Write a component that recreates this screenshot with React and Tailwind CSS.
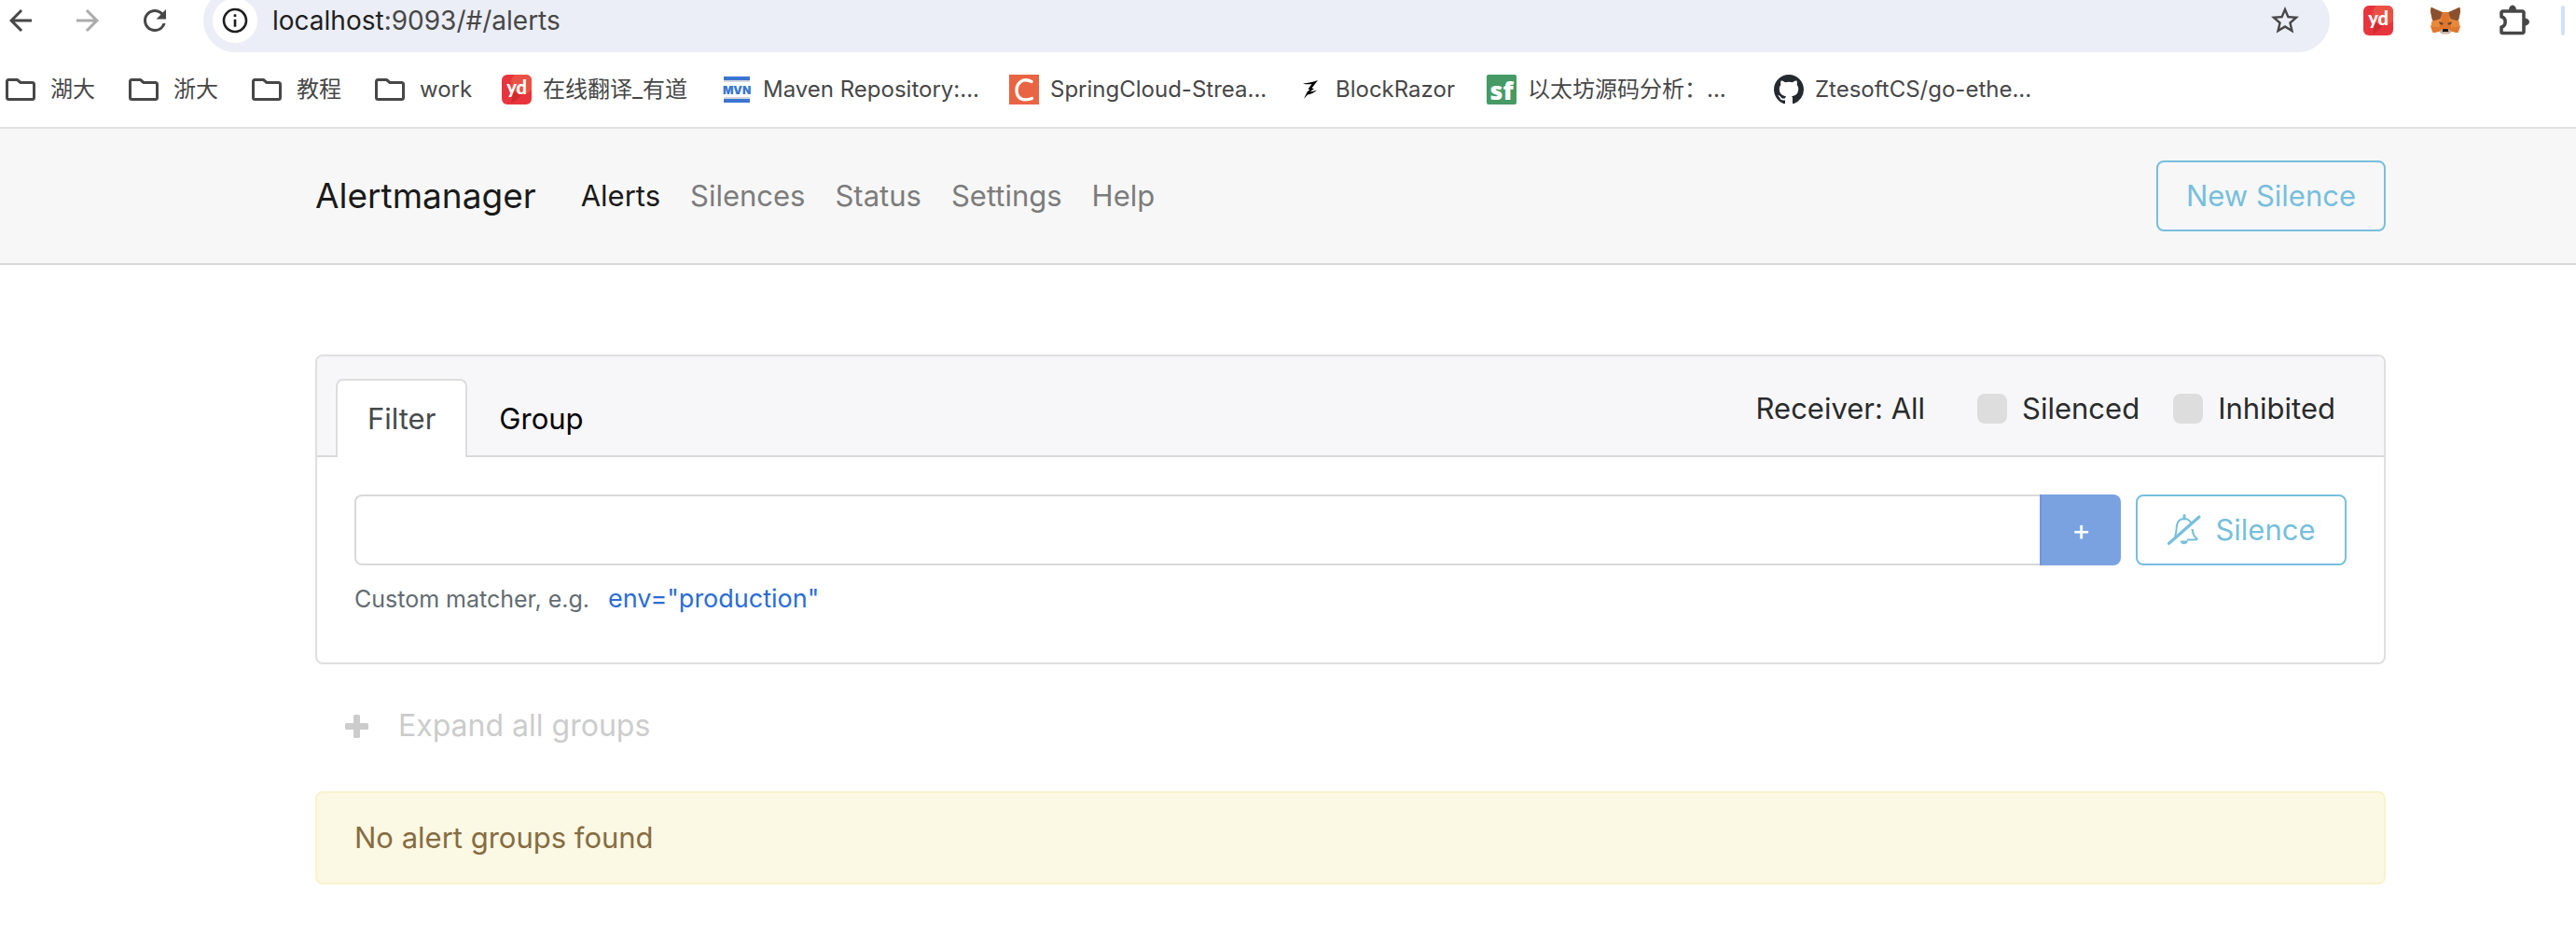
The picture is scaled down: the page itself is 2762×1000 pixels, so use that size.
import React, { useState } from "react";
import { MdArrowBack, MdArrowForward, MdRefresh, MdInfoOutline, MdStarBorder } from "react-icons/md";

function FolderIcon() {
  return (
    <svg className="h-6 w-9 shrink-0" viewBox="0 0 36 24" fill="none" stroke="#474747" strokeWidth="3" strokeLinejoin="round" aria-hidden="true">
      <path d="M1.5 3V20.5a2 2 0 0 0 2 2H28.500a2 2 0 0 0 2-2V6.500a2 2 0 0 0-2-2H16L12.500 1.500H3a1.500 1.500 0 0 0-1.500 1.500Z" />
    </svg>
  );
}

function YoudaoIcon() {
  return (
    <svg className="size-8 shrink-0" viewBox="0 0 32 32" aria-hidden="true">
      <defs>
        <clipPath id="yd-clip"><rect width="32" height="32" rx="6" /></clipPath>
      </defs>
      <g clipPath="url(#yd-clip)">
        <rect width="32" height="32" fill="#e8353d" />
        <path d="M10 30c4-1 11-5 12-13l-10-1Z" fill="#cf2c30" />
        <circle cx="22" cy="9" r="12" fill="#ea5145" />
        <text x="16" y="21" textAnchor="middle" fill="#fff" fontFamily="Lato, sans-serif" fontWeight="900" fontSize="20">yd</text>
      </g>
    </svg>
  );
}

function MavenIcon() {
  return (
    <svg className="size-8 shrink-0" viewBox="0 0 32 32" aria-hidden="true">
      <rect x="2" y="2" width="28" height="28" fill="#fff" />
      <rect x="2" y="2" width="28" height="4" fill="#3a76d2" />
      <rect x="2" y="6" width="28" height="2" fill="#d3d7dc" />
      <text x="16" y="21" textAnchor="middle" fill="#3a76d2" fontFamily="Inter, sans-serif" fontWeight="900" fontSize="12">MVN</text>
      <rect x="2" y="24" width="28" height="2" fill="#d3d7dc" />
      <rect x="2" y="26" width="28" height="4" fill="#3a76d2" />
    </svg>
  );
}

function CsdnIcon() {
  return (
    <svg className="size-8 shrink-0" viewBox="0 0 32 32" aria-hidden="true">
      <rect width="32" height="32" fill="#e96443" />
      <path d="M24 7.500C15 2.500 8 9 8 17c0 8.500 7 12 16.500 8.500" fill="none" stroke="#fff" strokeWidth="3.400" strokeLinecap="round" />
    </svg>
  );
}

function RazorIcon() {
  return (
    <svg className="size-8 shrink-0" viewBox="0 0 32 32" fill="#000" aria-hidden="true">
      <path d="M9 9.500C15 9 20 8 25 6L18.500 14.500 21 15 16.500 18.500C19 18 21.500 17.500 24 16.500 21 19.500 17 21 14 21.500L10 26 13.500 18.500 16.500 16 14.500 15.500 18.500 10C15 10.500 12 10.500 9 9.500Z" />
    </svg>
  );
}

function SegmentFaultIcon() {
  return (
    <svg className="size-8 shrink-0 overflow-visible" viewBox="0 0 32 32" aria-hidden="true">
      <rect width="32" height="32" rx="2" fill="#459a66" />
      <text x="16" y="27" textAnchor="middle" fill="#fff" fontFamily="Open Sans, sans-serif" fontWeight="800" fontSize="27">sf</text>
    </svg>
  );
}

function GithubIcon() {
  return (
    <svg className="size-8 shrink-0" viewBox="0 0 16 16" fill="#24292f" aria-hidden="true">
      <path d="M8 0C3.58 0 0 3.58 0 8c0 3.54 2.29 6.53 5.47 7.59.4.07.55-.17.55-.38 0-.19-.01-.82-.01-1.49-2.01.37-2.53-.49-2.69-.94-.09-.23-.48-.94-.82-1.13-.28-.15-.68-.52-.01-.53.63-.01 1.080.58 1.230.82.72 1.210 1.870.87 2.330.66.07-.52.28-.87.51-1.070-1.780-.2-3.640-.89-3.640-3.950 0-.87.31-1.590.82-2.150-.08-.2-.36-1.020.08-2.120 0 0 .67-.21 2.200.82.64-.18 1.320-.27 2-.27.68 0 1.360.09 2 .27 1.530-1.040 2.200-.82 2.200-.82.44 1.100.16 1.920.08 2.120.51.56.82 1.270.82 2.150 0 3.070-1.870 3.750-3.650 3.950.29.25.54.73.54 1.480 0 1.070-.01 1.930-.01 2.200 0 .21.15.46.55.38A8.010 8.010 0 0 0 16 8c0-4.420-3.580-8-8-8Z" />
    </svg>
  );
}

function FoxIcon() {
  return (
    <svg className="size-8 shrink-0" viewBox="0 0 96 96" aria-hidden="true">
      <path d="M2 5 38 21H58L94 5 96 18 90 48 95 68 88 87 68 83 58 91H38L28 83 8 87 1 68 6 48 0 18Z" fill="#df762d" />
      <path d="M6 48 38 40 30 58 28 83 8 87 1 68ZM90 48 58 40 66 58 68 83 88 87 95 68Z" fill="#e88a3a" />
      <path d="M2 5 38 22 31 43 10 49 5 43 0 18ZM94 5 58 22 65 43 86 49 91 43 96 18Z" fill="#8a5131" />
      <path d="M2 68 28 70 28 83 8 87ZM94 68 68 70 68 83 88 87Z" fill="#e0772f" />
      <path d="M27 52 41 56 39 62 30 60ZM69 52 55 56 57 62 66 60Z" fill="#5e4436" />
      <path d="M28 83 39 75H57L68 83 58 91H38Z" fill="#c9b6a8" />
      <path d="M40 75H56L58 84H38Z" fill="#161616" />
    </svg>
  );
}

function PuzzleIcon() {
  return (
    <svg className="size-9 shrink-0" viewBox="0 0 36 36" aria-hidden="true">
      <path d="M4 14V9.500A1.500 1.500 0 0 1 5.500 8H26.500A1.500 1.500 0 0 1 28 9.500V30A1.500 1.500 0 0 1 26.500 31.500H5.500A1.500 1.500 0 0 1 4 30V25C9.500 24 9.500 15 4 14Z" fill="none" stroke="#474747" strokeWidth="3.600" strokeLinejoin="round" />
      <path d="M12 7a4 5.500 0 0 1 8 0ZM29 15.500a5 4 0 0 1 0 8Z" fill="#474747" />
    </svg>
  );
}

function BellSlashIcon() {
  return (
    <svg className="h-9 w-10 shrink-0" viewBox="0 0 40 36" fill="none" stroke="currentColor" aria-hidden="true">
      <path d="M9 25C11 20 10.500 16 11 13 12 7 16 6 19 6S25 8 26.500 11" strokeWidth="2" />
      <path d="M27.500 17C28 22 29.500 25 32.500 27.500L31.500 28.500H22" strokeWidth="2.200" />
      <path d="M19 2.500V6" strokeWidth="3" strokeLinecap="round" />
      <path d="M2.500 32.500 35 4" strokeWidth="3.200" strokeLinecap="round" />
      <path d="M14.500 29.500h8.500a4.300 4.300 0 0 1-8.500 0Z" fill="currentColor" stroke="none" />
    </svg>
  );
}

const bookmarks = [
  { label: "湖大", Icon: FolderIcon, width: "w-[132px]" },
  { label: "浙大", Icon: FolderIcon, width: "w-[132px]" },
  { label: "教程", Icon: FolderIcon, width: "w-[132px]" },
  { label: "work", Icon: FolderIcon, width: "w-[136px]" },
  { label: "在线翻译_有道", Icon: YoudaoIcon, width: "w-[236px]" },
  { label: "Maven Repository:...", Icon: MavenIcon, width: "w-[308px]" },
  { label: "SpringCloud-Strea...", Icon: CsdnIcon, width: "w-[306px]" },
  { label: "BlockRazor", Icon: RazorIcon, width: "w-[206px]" },
  { label: "以太坊源码分析：...", Icon: SegmentFaultIcon, width: "w-[308px]" },
  { label: "ZtesoftCS/go-ethe...", Icon: GithubIcon, width: "w-[308px]" },
];

const navLinks = ["Alerts", "Silences", "Status", "Settings", "Help"];

function BrowserBar() {
  return (
    <header className="overflow-hidden border-b-2 border-[#e1e1e1] bg-white">
      <div className="-mt-3 flex h-[68px] items-center pr-3 pl-1 text-[#474747]">
        <div className="flex gap-9">
          <button aria-label="Back"><MdArrowBack className="size-9" /></button>
          <button aria-label="Forward" className="text-[#ababab]"><MdArrowForward className="size-9" /></button>
          <button aria-label="Reload"><MdRefresh className="size-9" /></button>
        </div>
        <div className="mr-9 ml-[34px] flex h-full flex-1 items-center gap-4 rounded-full bg-[#ebeef6] pr-[30px] pl-[10px]">
          <button aria-label="Site information" className="flex size-12 items-center justify-center rounded-full bg-white text-[#1f1f1f]">
            <MdInfoOutline className="size-8" />
          </button>
          <a href="#/alerts" className="flex-1 text-[28px] leading-10">
            <span className="text-[#1f1f1f]">localhost</span>:9093/#/alerts
          </a>
          <button aria-label="Bookmark this page"><MdStarBorder className="size-9" /></button>
        </div>
        <div className="flex items-center gap-10">
          <button aria-label="Youdao"><YoudaoIcon /></button>
          <button aria-label="MetaMask"><FoxIcon /></button>
        </div>
        <button aria-label="Extensions" className="mr-8 ml-10"><PuzzleIcon /></button>
        <span className="h-8 w-1 rounded-full bg-[#d3e0fb]" />
      </div>
      <nav aria-label="Bookmarks" className="flex h-20 items-center pl-1.5">
        {bookmarks.map(({ label, Icon, width }) => (
          <a key={label} href="#" className={`flex shrink-0 items-center gap-3 text-2xl whitespace-nowrap text-[#474747] ${width}`}>
            <Icon />
            <span>{label}</span>
          </a>
        ))}
      </nav>
    </header>
  );
}

function Toggle({ label }) {
  return (
    <label className="flex items-center gap-4">
      <input type="checkbox" className="size-8 appearance-none rounded-lg bg-[#dddddd] checked:bg-[#77bfdc]" />
      {label}
    </label>
  );
}

function Tab({ label, active, onClick }) {
  return (
    <button
      role="tab"
      aria-selected={active}
      onClick={onClick}
      className={`-mb-0.5 h-[84px] rounded-t-lg border-2 border-b-0 px-8 ${active ? "border-[#dddddd] bg-white text-[#464a4c]" : "border-transparent text-black"}`}
    >
      {label}
    </button>
  );
}

export default function App() {
  const [tab, setTab] = useState("Filter");
  const [matcher, setMatcher] = useState("");
  return (
    <div className="min-h-screen bg-white font-['Inter','Noto_Sans_CJK_SC',sans-serif] text-[31px] leading-[48px] text-[#292b2c]">
      <BrowserBar />
      <div className="border-b-2 border-[#d9d9d9] bg-[#f7f7f7] py-[34px] pr-[204px] pl-[338px]">
        <div className="flex items-center">
          <a href="#" className="mr-12 text-[37px] text-[#1a1a1a]">Alertmanager</a>
          <nav className="flex flex-1 gap-8">
            {navLinks.map((l) => (
              <a key={l} href={"#/" + l.toLowerCase()} className={l === "Alerts" ? "text-[#1a1a1a]" : "text-[#7c7c7c]"}>{l}</a>
            ))}
          </nav>
          <button className="h-[76px] rounded-lg border-2 border-[#77bfdc] px-[30px] text-[#77bfdc]">New Silence</button>
        </div>
      </div>
      <main className="pt-24 pr-[204px] pl-[338px]">
        <section className="rounded-lg border-2 border-[#dfdfdf]">
          <div className="flex items-end justify-between rounded-t-md border-b-2 border-[#d9d9d9] bg-[#f7f7f9] pt-6 pr-[52px] pl-5">
            <div role="tablist" className="flex">
              {["Filter", "Group"].map((t) => (
                <Tab key={t} label={t} active={tab === t} onClick={() => setTab(t)} />
              ))}
            </div>
            <div className="flex items-center gap-9 pb-[26px]">
              <button className="mr-5">Receiver: All</button>
              <Toggle label="Silenced" />
              <Toggle label="Inhibited" />
            </div>
          </div>
          <div className="px-10 pt-10 pb-12">
            <div className="flex h-[76px]">
              <input
                aria-label="Custom matcher"
                value={matcher}
                onChange={(e) => setMatcher(e.target.value)}
                className="min-w-0 flex-1 rounded-l-lg border-2 border-r-0 border-[#d9d9d9] px-6 outline-none"
              />
              <button aria-label="Add matcher" className="mr-4 w-[87px] rounded-r-lg border-l-2 border-[#6f97db] bg-[#7ba2e0] text-white">+</button>
              <button className="flex w-[226px] items-center justify-center gap-3 rounded-lg border-2 border-[#77bfdc] text-[#77bfdc]">
                <BellSlashIcon />
                Silence
              </button>
            </div>
            <div className="mt-4 flex h-10 items-center gap-5 text-[25px]">
              <span className="text-[#636c72]">Custom matcher, e.g.</span>
              <button className="text-[27px] text-[#2b6dd4]">env="production"</button>
            </div>
          </div>
        </section>
        <button className="mt-7 mb-8 flex h-[76px] items-center gap-8 px-8 text-[32px] text-[#cccccc]">
          <svg className="size-[25px]" viewBox="0 0 25 25" fill="currentColor" aria-hidden="true">
            <path d="M9 1.500A1.500 1.500 0 0 1 10.500 0h4A1.500 1.500 0 0 1 16 1.500V9h7.500A1.500 1.500 0 0 1 25 10.500v4A1.500 1.500 0 0 1 23.500 16H16v7.500A1.500 1.500 0 0 1 14.500 25h-4A1.500 1.500 0 0 1 9 23.500V16H1.500A1.500 1.500 0 0 1 0 14.500v-4A1.500 1.500 0 0 1 1.500 9H9Z" />
          </svg>
          Expand all groups
        </button>
        <div role="status" className="flex h-[100px] items-center rounded-lg border-2 border-[#f9f2cf] bg-[#fbf8e4] px-10 text-[#866d41]">
          No alert groups found
        </div>
      </main>
    </div>
  );
}
